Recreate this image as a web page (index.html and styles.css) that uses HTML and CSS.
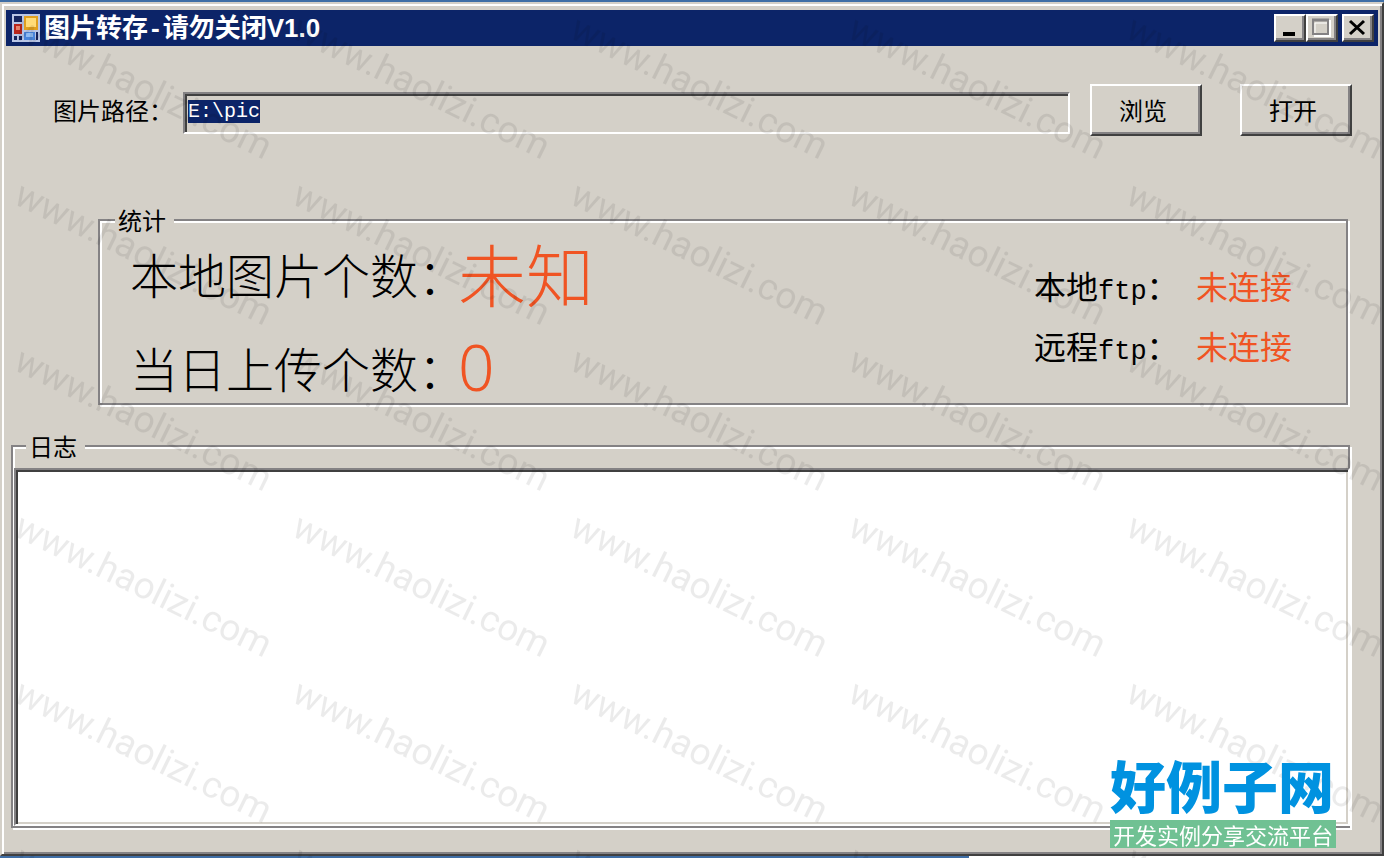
FILE: index.html
```html
<!DOCTYPE html>
<html lang="zh-CN">
<head>
  <meta charset="UTF-8">
  <meta name="viewport" content="width=device-width, initial-scale=1.0">
  <title>图片转存-请勿关闭V1.0</title>
  <link rel="stylesheet" href="styles.css">
</head>
<body>
  <div class="window">
    <header class="titlebar">
      <svg class="app-icon" width="28" height="28" viewBox="0 0 28 28">
        <rect width="28" height="28" fill="#b9c6e6"/>
        <rect x="2" y="2" width="8" height="6" fill="#16255f"/>
        <rect x="2" y="10" width="8" height="10" fill="#b8261c"/>
        <rect x="4" y="12" width="4" height="4" fill="#e8806a"/>
        <rect x="12" y="2" width="14" height="14" fill="#e0a020"/>
        <rect x="14" y="4" width="10" height="9" fill="#ffdc78"/>
        <rect x="2" y="22" width="3" height="4" fill="#16255f"/>
        <rect x="7" y="22" width="3" height="4" fill="#16255f"/>
        <rect x="12" y="18" width="11" height="8" fill="#4a86dc"/>
        <rect x="14" y="19" width="7" height="4" fill="#8fbcf4"/>
        <rect x="24" y="18" width="2" height="8" fill="#16255f"/>
      </svg>
      <h1>图片转存<span class="dash">-</span>请勿关闭V1.0</h1>
      <div class="controls">
        <button class="control" aria-label="最小化">
          <svg width="24" height="22" viewBox="0 0 24 22"><path d="M6 18h12" stroke="#000" stroke-width="4"/></svg>
        </button>
        <button class="control" aria-label="最大化" disabled>
          <svg width="24" height="22" viewBox="0 0 24 22">
            <path d="M5 20h16V4" fill="none" stroke="#fff" stroke-width="2"/>
            <rect x="4" y="4" width="15" height="14" fill="none" stroke="#848284" stroke-width="2"/>
            <path d="M3 4h17" stroke="#848284" stroke-width="3"/>
            <path d="M6 17V7h12" fill="none" stroke="#fff"/>
          </svg>
        </button>
        <button class="control close" aria-label="关闭">
          <svg width="24" height="22" viewBox="0 0 24 22"><path d="M5 5l14 13M19 5L5 18" stroke="#000" stroke-width="3"/></svg>
        </button>
      </div>
    </header>

    <main>
      <div class="path-row">
        <label for="path">图片路径：</label>
        <input type="text" id="path" value="E:\pic" readonly>
        <button class="btn">浏览</button>
        <button class="btn">打开</button>
      </div>

      <fieldset class="stats">
        <legend>统计</legend>
        <div class="counts">
          <p>本地图片个数：<output class="unknown">未知</output></p>
          <p>当日上传个数：<output class="number">0</output></p>
        </div>
        <div class="ftp">
          <p><span class="name">本地<span class="latin">ftp</span>：</span><output>未连接</output></p>
          <p><span class="name">远程<span class="latin">ftp</span>：</span><output>未连接</output></p>
        </div>
      </fieldset>

      <fieldset class="log">
        <legend>日志</legend>
        <textarea aria-label="日志" readonly></textarea>
      </fieldset>
    </main>
  </div>
  <div class="taskbar"></div>

  <!-- repeated watermark -->
  <svg class="watermark" width="100%" height="100%" aria-hidden="true">
    <defs>
      <pattern id="mark" y="9" width="278" height="166" patternUnits="userSpaceOnUse">
        <text class="mark-text" transform="translate(12 28) rotate(26)">www.haolizi.com</text>
      </pattern>
    </defs>
    <rect width="100%" height="100%" fill="url(#mark)"/>
  </svg>

  <div class="brand">
    <strong>好例子网</strong>
    <span>开发实例分享交流平台</span>
  </div>

  <script>
    // start with the whole path selected
    const path = document.getElementById('path');
    path.focus();
    path.select();
  </script>
</body>
</html>
```
FILE: styles.css
```css
* {
  box-sizing: border-box;
}
body {
  margin: 0;
  padding-top: 2px;
  height: 100vh;
  display: flex;
  flex-direction: column;
  overflow: hidden;
  background: #3f6ea6;
  color: #000;
  font-family: "Noto Sans CJK SC", sans-serif;
  font-size: 24px;
  line-height: 28px;
}
.window {
  flex: 1;
  min-height: 0;
  display: flex;
  flex-direction: column;
  padding: 4px;
  background: #d4d0c8;
  border: 2px solid;
  border-color: #d4d0c8 #404040 #404040 #d4d0c8;
  box-shadow: inset 2px 2px 0 #fff, inset -2px -2px 0 #848284;
}
.titlebar {
  display: flex;
  align-items: center;
  height: 36px;
  margin-top: 2px;
  padding: 0 4px 0 6px;
  background: #0c2468;
}
h1 {
  flex: 1;
  margin: 0 0 0 4px;
  color: #fff;
  font-family: "Liberation Sans", "Noto Sans CJK SC", sans-serif;
  font-size: 26px;
  line-height: 36px;
}
.dash {
  padding: 0 3px;
}
.controls {
  display: flex;
}
button {
  background: #d4d0c8;
  color: #000;
  font: inherit;
  border: 2px solid;
  border-color: #fff #404040 #404040 #fff;
  box-shadow: inset -2px -2px 0 #848284;
}
.control {
  width: 32px;
  height: 28px;
  padding: 0 2px 2px 0;
  display: flex;
  align-items: center;
  justify-content: center;
}
.close {
  margin-left: 4px;
}
main {
  flex: 1;
  min-height: 0;
  display: flex;
  flex-direction: column;
  padding: 38px 28px 22px 5px;
}
.path-row {
  display: flex;
  align-items: center;
  margin-right: -2px;
  padding-left: 42px;
}
.path-row label {
  width: 130px;
}
#path {
  flex: 1;
  min-width: 0;
  height: 42px;
  margin-top: 6px;
  padding: 0 3px 4px;
  background: #d4d0c8;
  border: 2px solid;
  border-color: #848284 #fff #fff #848284;
  box-shadow: inset 2px 2px 0 #404040;
  outline: none;
  font-family: "Liberation Mono", monospace;
  font-size: 20px;
}
#path::selection {
  background: #0c2468;
  color: #fff;
}
.btn {
  width: 112px;
  height: 52px;
  padding: 0 6px 0 0;
  margin-left: 20px;
}
.btn + .btn {
  margin-left: 38px;
}
fieldset {
  min-width: 0;
  margin: 0;
  padding: 0;
  border: 2px solid #848284;
  box-shadow: 2px 2px 0 #fff, inset 2px 2px 0 #fff;
}
legend {
  padding: 0 8px 0 3px;
  background: #d4d0c8;
  line-height: 26px;
}
.stats {
  display: flex;
  justify-content: space-between;
  margin: 71px 2px 0 87px;
  padding: 10px 54px 6px 30px;
}
.stats legend {
  margin-left: -15px;
}
p {
  margin: 0;
}
output {
  color: #f05423;
}
.counts {
  display: grid;
  gap: 34px;
  font-size: 48px;
  font-weight: 300;
}
.counts p {
  display: flex;
  align-items: center;
  height: 60px;
}
.unknown,
.number {
  margin-left: -8px;
  line-height: 60px;
}
.unknown {
  font-size: 68px;
}
.number {
  font-family: "Noto Sans", sans-serif;
  font-size: 64px;
}
.ftp {
  display: grid;
  align-content: start;
  gap: 20px;
  padding-top: 22px;
  font-size: 32px;
  line-height: 40px;
}
.ftp p {
  display: flex;
  height: 40px;
}
.name {
  width: 162px;
}
.latin {
  font-family: "Liberation Mono", monospace;
  font-size: 27px;
}
.log {
  flex: 1;
  min-height: 0;
  display: flex;
  margin-top: 28px;
  padding: 9px 0 0 1px;
}
.log legend {
  margin-left: 12px;
}
.log textarea {
  flex: 1;
  margin-right: -2px;
  resize: none;
  background: #fff;
  border: 2px solid;
  border-color: #848284 #fff #fff #848284;
  box-shadow: inset 2px 2px 0 #404040, inset -2px -2px 0 #d4d0c8;
  outline: none;
  font: inherit;
}
.taskbar {
  height: 2px;
  background: linear-gradient(90deg, transparent 70%, #fff 70%);
}
.watermark {
  position: fixed;
  inset: 0;
  pointer-events: none;
}
.mark-text {
  font-family: Roboto, sans-serif;
  font-size: 37px;
  fill: #000;
  fill-opacity: 0.08;
}
.brand {
  position: fixed;
  right: 48px;
  bottom: 10px;
  display: flex;
  flex-direction: column;
}
.brand strong {
  padding-bottom: 8px;
  color: #0092e0;
  font-size: 56px;
  font-weight: 900;
  line-height: 56px;
}
.brand span {
  padding: 0 3px;
  background: #70c193;
  color: #fff;
  font-size: 22px;
}
```
